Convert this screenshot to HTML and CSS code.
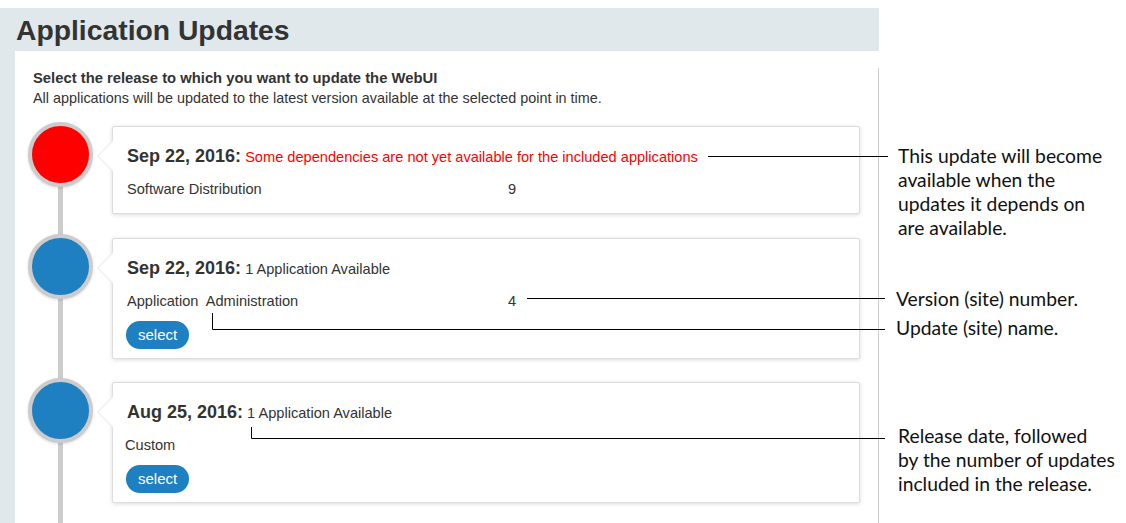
FILE: index.html
```html
<!DOCTYPE html>
<html lang="en">
<head>
  <meta charset="UTF-8" />
  <meta name="viewport" content="width=device-width, initial-scale=1.0" />
  <title>Application Updates</title>
  <link rel="stylesheet" href="styles.css">
</head>
<body>
  <div class="screen">
    <div class="page">
      <div class="app-header">
        <h1>Application Updates</h1>
      </div>

      <div class="app-body">
        <div class="panel">
          <div class="intro">
            <div class="intro-title">Select the release to which you want to update the WebUI</div>
            <div class="intro-text">All applications will be updated to the latest version available at the selected point in time.</div>
          </div>

          <div class="timeline">
            <div class="release">
              <div class="dot blocked"></div>
              <div class="card">
                <div class="card-title"><b>Sep 22, 2016:</b> <span class="warn">Some dependencies are not yet available for the included applications</span></div>
                <div class="app-row"><span>Software Distribution</span><span>9</span></div>
              </div>
            </div>

            <div class="release">
              <div class="dot"></div>
              <div class="card">
                <div class="card-title"><b>Sep 22, 2016:</b> 1 Application Available</div>
                <div class="app-row"><span>Application&nbsp; Administration</span><span>4</span></div>
                <button class="select-btn">select</button>
              </div>
            </div>

            <div class="release">
              <div class="dot"></div>
              <div class="card">
                <div class="card-title"><b>Aug 25, 2016:</b> 1 Application Available</div>
                <div class="app-row shift"><span>Custom</span><span></span></div>
                <button class="select-btn">select</button>
              </div>
            </div>
          </div>
        </div>
      </div>
    </div>

    <!-- callout lines drawn over the screenshot -->
    <svg class="callout-lines" width="1126" height="523" viewBox="0 0 1126 523">
      <g stroke="#000" stroke-width="1" fill="none">
        <path d="M708 156.5H888" />
        <path d="M527 298.5H885" />
        <path d="M212.5 313V329.5H885" />
        <path d="M251.5 427V438.5H885" />
      </g>
    </svg>

    <div class="callout c1">This update will become<br>available when the<br>updates it depends on<br>are available.</div>
    <div class="callout c2">Version (site) number.</div>
    <div class="callout c3">Update (site) name.</div>
    <div class="callout c4">Release date, followed<br>by the number of updates<br>included in the release.</div>
  </div>
</body>
</html>
```

FILE: styles.css
```css
html, body {
  margin: 0;
  padding: 0;
  background: #fff;
  overflow: hidden;
}

body {
  font-family: "Liberation Sans", Arial, sans-serif;
  color: #333;
}

.screen {
  position: relative;
  width: 1126px;
  height: 523px;
  overflow: hidden;
}

.page {
  width: 879px;
  margin-top: 8px;
}

.app-header {
  background: #e1e8ec;
  height: 43px;
}

.app-header h1 {
  margin: 0;
  padding-left: 16px;
  font-size: 28.3px;
  line-height: 44px;
  font-weight: bold;
  color: #333;
}

.app-body {
  background: #e1e8ec;
  padding-left: 15px;
}

.panel {
  background: #fff;
  padding-top: 17px;
  height: 520px;
}

.intro,
.timeline {
  border-right: 1px solid #ccc;
}

.intro {
  padding-left: 18px;
}

.intro-title {
  font-size: 14.8px;
  font-weight: bold;
  line-height: 20px;
}

.intro-text {
  font-size: 14.4px;
  line-height: 20px;
}

.timeline {
  position: relative;
  padding-top: 18px;
  padding-right: 18px;
  height: 600px;
}

.timeline::before {
  content: "";
  position: absolute;
  left: 43px;
  top: 60px;
  bottom: 0;
  width: 5px;
  background: #ccc;
}

.release {
  display: flex;
  align-items: flex-start;
  margin-bottom: 24px;
}

.release:nth-child(2) {
  margin-bottom: 23px;
}

.dot {
  position: relative;
  flex: none;
  width: 57px;
  height: 57px;
  margin: -4px 0 0 13px;
  border: 4px solid #ccc;
  border-radius: 50%;
  background: #1e7fc1;
  box-shadow: 0 1px 3px rgba(0, 0, 0, 0.15);
}

.dot.blocked {
  background: #f00;
}

.card {
  position: relative;
  flex: 1;
  margin-left: 19px;
  padding: 18px 14px 7px;
  background: #fff;
  border: 1px solid #ddd;
  border-radius: 2px;
  box-shadow: 0 1px 4px rgba(0, 0, 0, 0.14);
}

.card::before,
.card::after {
  content: "";
  position: absolute;
  top: 13px;
  border-style: solid;
  border-color: transparent;
}

.card::before {
  left: -16px;
  border-width: 16px 16px 16px 0;
  border-right-color: #e3e3e3;
}

.card::after {
  left: -15px;
  border-width: 16px 16px 16px 0;
  border-right-color: #fff;
}

.card-title {
  font-size: 14.6px;
  line-height: 22px;
}

.card-title b {
  font-size: 18px;
}

.warn {
  color: #f00;
}

.app-row {
  display: grid;
  grid-template-columns: 381px auto;
  margin-top: 11px;
  margin-bottom: 7px;
  font-size: 14.6px;
  line-height: 20px;
}

.app-row.shift {
  margin-left: -2px;
}

.select-btn {
  display: block;
  margin: 10px 0 2px -1px;
  height: 28px;
  padding: 0 12px;
  border: none;
  border-radius: 14px;
  background: #1e7fc1;
  color: #fff;
  font-family: "Liberation Sans", Arial, sans-serif;
  font-size: 15px;
  line-height: 28px;
}

.callout-lines {
  position: absolute;
  left: 0;
  top: 0;
  pointer-events: none;
}

.callout {
  position: absolute;
  left: 898px;
  font-family: Lato, "Open Sans", sans-serif;
  font-size: 19.3px;
  line-height: 24px;
  color: #111;
  white-space: nowrap;
}

.c1 { top: 144px; }
.c2 { top: 287px; left: 896px; }
.c3 { top: 316px; left: 896px; }
.c4 { top: 424px; }
```
